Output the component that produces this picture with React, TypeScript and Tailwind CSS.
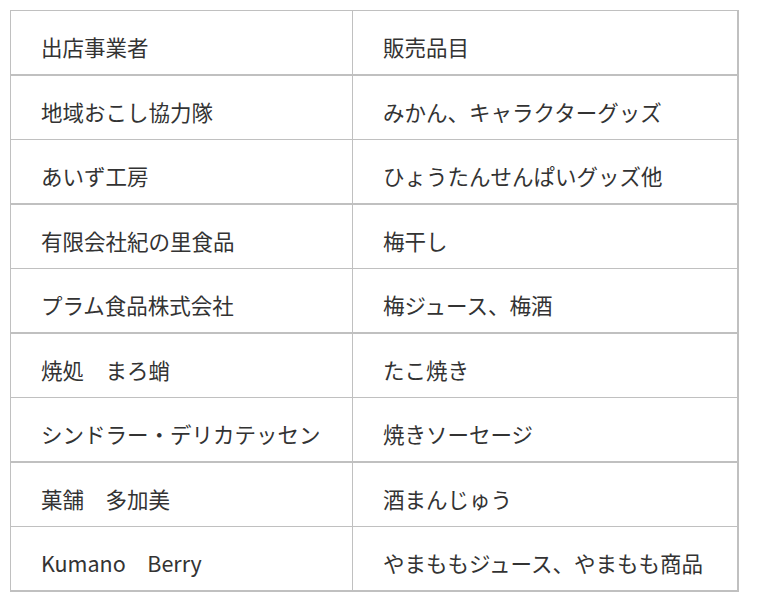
import React from "react";

const rows: [string, string][] = [
  ["出店事業者", "販売品目"],
  ["地域おこし協力隊", "みかん、キャラクターグッズ"],
  ["あいず工房", "ひょうたんせんぱいグッズ他"],
  ["有限会社紀の里食品", "梅干し"],
  ["プラム食品株式会社", "梅ジュース、梅酒"],
  ["焼処　まろ蛸", "たこ焼き"],
  ["シンドラー・デリカテッセン", "焼きソーセージ"],
  ["菓舗　多加美", "酒まんじゅう"],
  ["Kumano　Berry", "やまももジュース、やまもも商品"],
];

export default function App() {
  return (
    <div
      className="w-[757px] h-[599px] bg-white pt-[10px] pl-[10px]"
      style={{ fontFamily: '"Noto Sans CJK JP", "Noto Sans", sans-serif' }}
    >
      <div className="w-[729px] border-t border-l border-r-2 border-b-2 border-[#c0c0c0] text-[21.5px] text-[#333333]">
        {rows.map((r, i) => (
          <div
            key={i}
            className={
              "flex " +
              (i === rows.length - 1
                ? "h-[63px]"
                : i % 2 === 0
                ? "h-[65px] border-b-2 border-[#c0c0c0]"
                : "h-[64px] border-b border-[#c0c0c0]")
            }
          >
            <div className="w-[342px] border-r border-[#c0c0c0] pl-[30px] flex items-center pt-[10px]">
              {r[0]}
            </div>
            <div className="flex-1 pl-[30px] flex items-center pt-[10px]">{r[1]}</div>
          </div>
        ))}
      </div>
    </div>
  );
}
